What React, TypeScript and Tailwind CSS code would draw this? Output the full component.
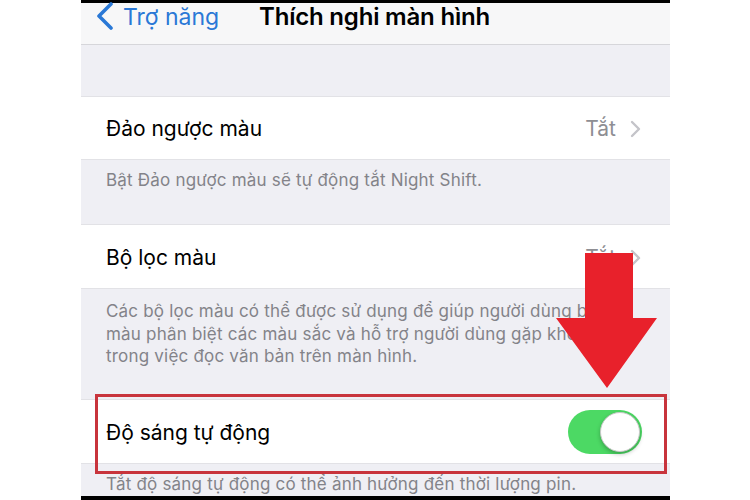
import React from "react";

const font = { fontFamily: "Inter, 'Noto Sans', sans-serif" };

function Chevron() {
  return (
    <svg width="12" height="18" viewBox="0 0 12 18" className="ml-[14px]">
      <polyline points="2,2 9,9 2,16" fill="none" stroke="#c4c4c9" strokeWidth="2.4" strokeLinecap="round" strokeLinejoin="round" />
    </svg>
  );
}

export default function App() {
  return (
    <div className="relative w-[750px] h-[500px] bg-white overflow-hidden" style={font}>
      <div className="ml-[81px] w-[589px] h-[500px] flex flex-col bg-[#efeff4]">
        <div className="h-[3px] bg-black shrink-0" />
        <div className="h-[42px] shrink-0 bg-[#f7f7f8] border-b border-[#d6d6da] flex items-start relative">
          <svg width="20" height="28" viewBox="0 0 20 28" className="absolute left-[14px] top-[-1px]">
            <polyline points="16,2 4,14 16,26" fill="none" stroke="#2a78d6" strokeWidth="3.6" strokeLinecap="round" strokeLinejoin="round" />
          </svg>
          <span className="absolute left-[42px] top-[0px] text-[23px] leading-[28px] text-[#2a78d6]">Trợ năng</span>
          <span className="absolute left-[178px] top-[0px] text-[24px] leading-[28px] font-semibold text-black tracking-[-0.2px]">Thích nghi màn hình</span>
        </div>
        <div className="h-[51px] shrink-0" />
        <div className="h-[64px] shrink-0 bg-white border-y border-[#e2e2e6] flex items-center pl-[25px] pr-[28px] pt-[2px]">
          <span className="text-[21px] text-black flex-1">Đảo ngược màu</span>
          <span className="text-[21px] text-[#8e8e93]">Tắt</span>
          <Chevron />
        </div>
        <div className="h-[64px] shrink-0 pl-[25px] pt-[9px] text-[17px] leading-[22px] text-[#838389] whitespace-nowrap tracking-[0.2px]">
          Bật Đảo ngược màu sẽ tự động tắt Night Shift.
        </div>
        <div className="h-[65px] shrink-0 bg-white border-y border-[#e2e2e6] flex items-center pl-[25px] pr-[28px] pt-[2px]">
          <span className="text-[21px] text-black flex-1">Bộ lọc màu</span>
          <span className="text-[21px] text-[#8e8e93]">Tắt</span>
          <Chevron />
        </div>
        <div className="h-[110px] shrink-0 pl-[25px] pt-[11px] text-[17px] leading-[22.5px] text-[#838389] whitespace-nowrap overflow-hidden tracking-[0.2px]">
          <div>Các bộ lọc màu có thể được sử dụng để giúp người dùng bị mù</div>
          <div>màu phân biệt các màu sắc và hỗ trợ người dùng gặp khó khăn</div>
          <div>trong việc đọc văn bản trên màn hình.</div>
        </div>
        <div className="h-[65px] shrink-0 bg-white border-y border-[#e2e2e6] flex items-center pl-[25px] pr-[28px]">
          <span className="text-[21px] text-black flex-1 pt-[2px]">Độ sáng tự động</span>
          <div className="w-[74px] h-[44px] rounded-full bg-[#4cd964] relative">
            <div className="absolute right-[2px] top-[2px] w-[40px] h-[40px] rounded-full bg-white border border-[#c8c8c8] shadow-[0_2px_4px_rgba(0,0,0,0.25)]" />
          </div>
        </div>
        <div className="h-[32px] shrink-0 pl-[25px] pt-[9px] text-[17px] leading-[22px] text-[#838389] whitespace-nowrap tracking-[0.2px]">
          Tắt độ sáng tự động có thể ảnh hưởng đến thời lượng pin.
        </div>
        <div className="flex-1 bg-black" />
      </div>
      <div className="absolute left-[95px] top-[394px] w-[572px] h-[80px] border-[3px] border-[#c8343c]" />
      <svg className="absolute left-0 top-0" width="750" height="500" viewBox="0 0 750 500">
        <polygon points="585,253 633,253 633,318 657,318 607,388 556,318 585,318" fill="#e8212b" />
      </svg>
    </div>
  );
}
